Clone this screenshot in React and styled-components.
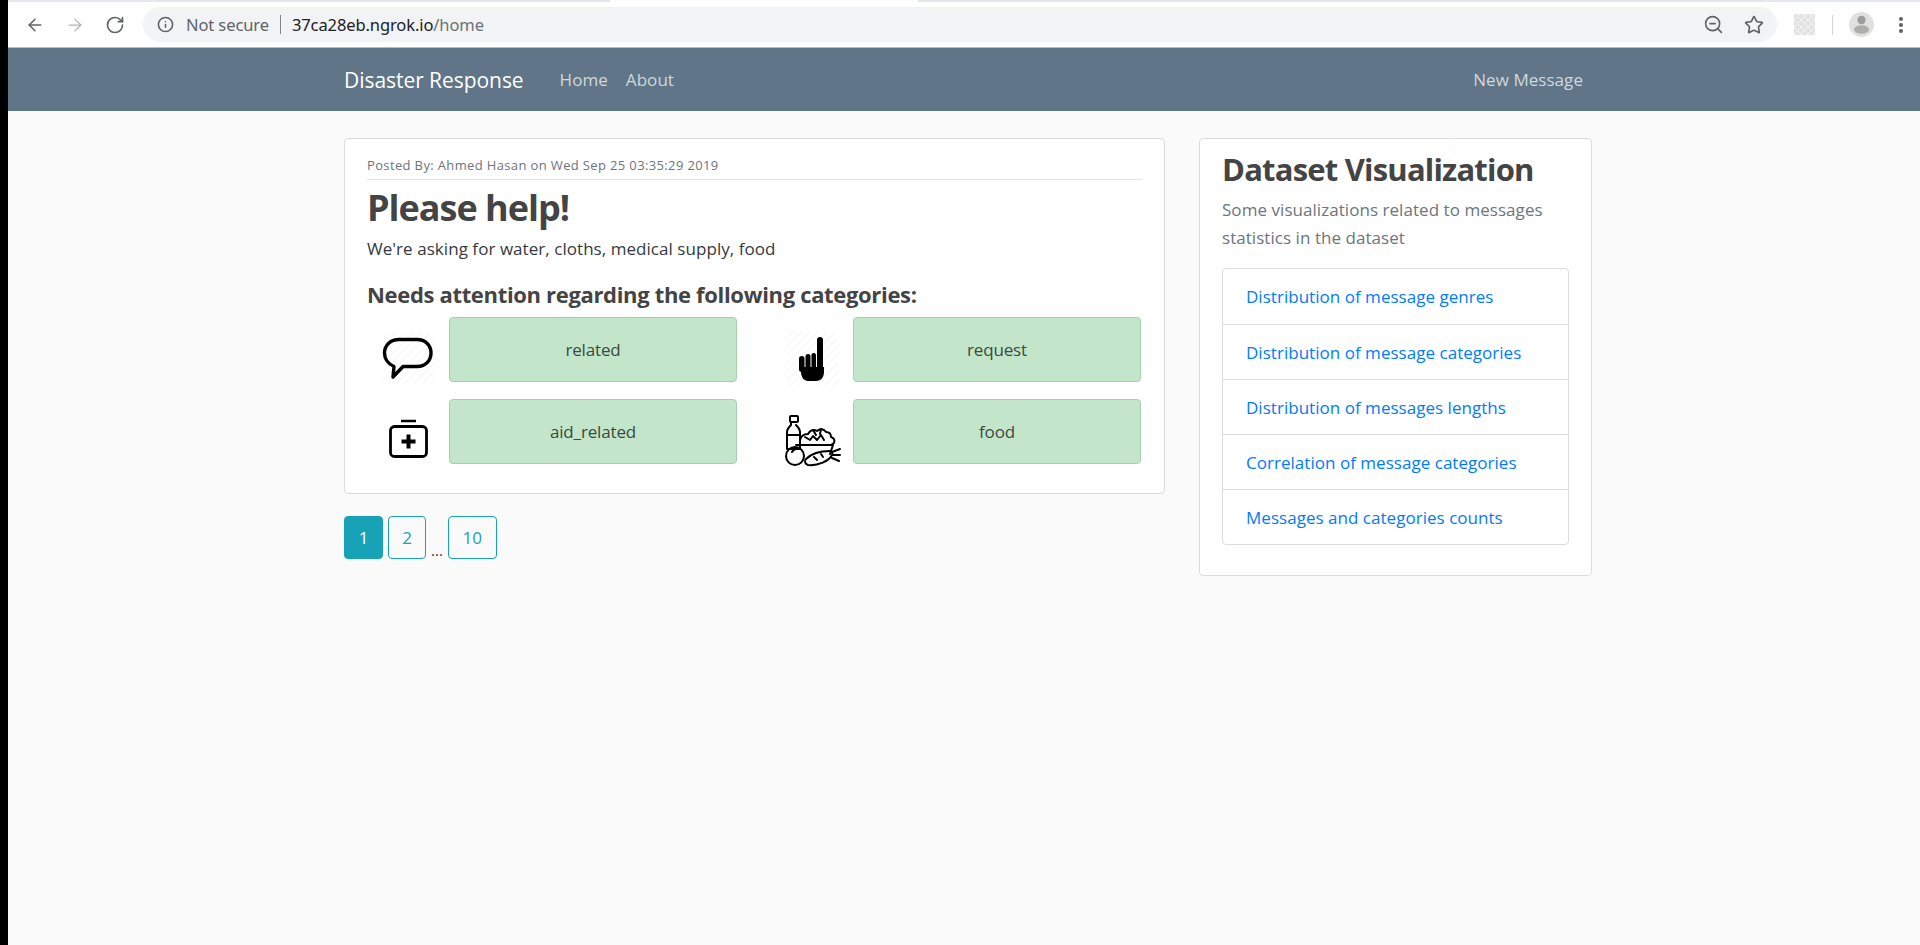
import React from "react";
import styled, { createGlobalStyle } from "styled-components";
import { ArrowLeft, ArrowRight, RotateCw, Info, ZoomOut, Star } from "lucide-react";

const Global = createGlobalStyle`
  html, body { margin: 0; padding: 0; height: 100%; background: #000; }
  #root { height: 100%; }
  * { box-sizing: border-box; }
  body {
    font-family: "Open Sans", "Noto Sans", "Liberation Sans", sans-serif;
    color: #343a40;
    overflow: hidden;
  }
`;

const Shell = styled.div`
  height: 945px;
  padding-left: 8px;
  background: #000;
`;

const Window = styled.div`
  height: 100%;
  background: #fafafa;
  display: flex;
  flex-direction: column;
`;

const TabEdge = styled.div`
  height: 2px;
  flex: none;
  background: linear-gradient(to right, #e4e8ec 0 602px, #fff 602px 910px, #e4e8ec 910px);
`;

const Toolbar = styled.div`
  height: 46px;
  flex: none;
  background: #fff;
  border-bottom: 1px solid #b8bcc0;
  display: flex;
  align-items: center;
  padding: 0 0 0 17px;
  color: #5f6368;
`;

const NavIcons = styled.div`
  display: flex;
  align-items: center;
  gap: 20px;
  margin-right: 18px;
`;

const Omnibox = styled.div`
  width: 1634px;
  height: 35px;
  border-radius: 18px;
  background: #f1f3f4;
  display: flex;
  align-items: center;
  padding: 0 13px 0 14px;
  font-size: 16.5px;
  font-family: "Noto Sans", sans-serif;
  letter-spacing: -0.1px;
`;

const Secure = styled.span`
  margin-left: 12px;
  color: #5f6368;
`;

const Bar = styled.span`
  width: 1px;
  height: 19px;
  background: #80868b;
  margin: 0 11px;
`;

const Host = styled.span`
  color: #202124;
`;

const Path = styled.span`
  color: #6c7075;
`;

const OmniIcons = styled.div`
  margin-left: auto;
  display: flex;
  align-items: center;
  gap: 20px;
`;

const ChromeRight = styled.div`
  display: flex;
  align-items: center;
  margin-left: 17px;
`;

const ExtIcon = styled.div`
  width: 21px;
  height: 21px;
  background: #e2e2e2;
  background-image: repeating-linear-gradient(45deg, #f6f6f6 0 1px, transparent 1px 5px),
    repeating-linear-gradient(-45deg, #f6f6f6 0 1px, transparent 1px 5px);
`;

const Separator = styled.div`
  width: 1px;
  height: 20px;
  background: #d4d6d8;
  margin: 0 16px 0 17px;
`;

const Avatar = styled.div`
  width: 25px;
  height: 25px;
  border-radius: 50%;
  background: #e0e0e0;
  overflow: hidden;
`;

const Dots = styled.div`
  margin-left: 25px;
  display: flex;
  flex-direction: column;
  gap: 2px;
  span {
    width: 4px;
    height: 4px;
    border-radius: 50%;
    background: #5f6368;
  }
`;

const Navbar = styled.nav`
  height: 63px;
  flex: none;
  background: #607587;
  display: flex;
  align-items: center;
  padding: 0 337px 0 336px;
  font-size: 17px;
  letter-spacing: 0.05px;
`;

const Brand = styled.a`
  color: #fff;
  font-size: 21px;
  margin-right: 36px;
  letter-spacing: -0.05px;
`;

const NavLink = styled.a`
  color: rgba(255, 255, 255, 0.72);
  margin-right: ${(p) => p.$gap || 0}px;
  margin-left: ${(p) => (p.$right ? "auto" : "0")};
`;

const Content = styled.main`
  display: flex;
  align-items: flex-start;
  gap: 34px;
  padding: 27px 0 0 336px;
`;

const MainColumn = styled.div`
  width: 821px;
`;

const Card = styled.section`
  background: #fff;
  border: 1px solid #dcdcdc;
  border-radius: 4px;
`;

const PostCard = styled(Card)`
  height: 356px;
  padding: 17px 22px 0 22px;
`;

const Meta = styled.div`
  font-size: 13px;
  line-height: 18px;
  color: #6c757d;
  padding-bottom: 5px;
  border-bottom: 1px solid #e3e3e3;
  letter-spacing: 0.36px;
`;

const Title = styled.h1`
  margin: 3px 0 0;
  font-size: 36px;
  line-height: 50px;
  font-weight: 700;
  color: #444;
  letter-spacing: -1px;
`;

const Body = styled.p`
  margin: 3px 0 0;
  font-size: 17px;
  line-height: 25px;
  color: #343a40;
  letter-spacing: 0.05px;
`;

const SubTitle = styled.h4`
  margin: 17px 0 0;
  font-size: 22px;
  line-height: 32px;
  font-weight: 700;
  color: #444;
  letter-spacing: -0.33px;
`;

const Categories = styled.div`
  margin-top: 7px;
  display: grid;
  grid-template-columns: 370px 370px;
  column-gap: 34px;
  row-gap: 17px;
`;

const CategoryItem = styled.div`
  display: flex;
  align-items: stretch;
  justify-content: space-between;
`;

const IconSlot = styled.div`
  width: 82px;
  display: flex;
  align-items: flex-end;
  justify-content: center;
  svg {
    margin-bottom: -3px;
    flex: none;
  }
`;

const Chip = styled.div`
  width: 288px;
  height: 65px;
  background: #c3e6cb;
  border: 1px solid #a5cfae;
  border-radius: 4px;
  display: flex;
  align-items: center;
  justify-content: center;
  font-size: 17px;
  color: #3b4a40;
  letter-spacing: -0.15px;
`;

const Pager = styled.div`
  margin-top: 22px;
  display: flex;
  align-items: flex-end;
  gap: 5px;
`;

const PageButton = styled.a`
  height: 43px;
  min-width: ${(p) => p.$width}px;
  border: 1px solid #17a2b8;
  border-radius: 4px;
  display: flex;
  align-items: center;
  justify-content: center;
  font-size: 17px;
  color: ${(p) => (p.$active ? "#fff" : "#17a2b8")};
  background: ${(p) => (p.$active ? "#17a2b8" : "transparent")};
`;

const Ellipsis = styled.span`
  font-size: 15px;
  line-height: 17px;
  color: #333;
`;

const SideCard = styled(Card)`
  width: 393px;
  height: 438px;
  padding: 6px 22px 0 22px;
`;

const SideTitle = styled.h2`
  margin: 0;
  font-size: 31px;
  line-height: 48px;
  font-weight: 700;
  color: #444;
  letter-spacing: -0.8px;
`;

const Lead = styled.p`
  margin: 3px 0 0;
  font-size: 17px;
  line-height: 28px;
  color: #6c757d;
  letter-spacing: 0.05px;
`;

const LinkList = styled.ul`
  list-style: none;
  margin: 16px 0 0;
  padding: 0;
  border: 1px solid #dcdcdc;
  border-radius: 4px;
`;

const LinkItem = styled.li`
  height: 55px;
  padding-left: 23px;
  display: flex;
  align-items: center;
  font-size: 17px;
  color: #007bff;
  letter-spacing: 0.03px;
  & + & {
    border-top: 1px solid #dcdcdc;
  }
`;

const Hatch = ({ id }) => (
  <defs>
    <pattern id={id} width="6" height="6" patternUnits="userSpaceOnUse" patternTransform="rotate(-45)">
      <rect width="6" height="1" fill="#f5f5f5" />
    </pattern>
  </defs>
);

const BubbleIcon = () => (
  <svg width="60" height="60" viewBox="0 0 60 60">
    <Hatch id="hatch-a" />
    <rect x="5" y="8" width="52" height="50" fill="url(#hatch-a)" />
    <path
      d="M21 14.500h18c8 0 14 5.500 14 13.500s-6 13.500-14 13.500H25L15 52l1-10.500C10 39 6.500 33.500 6.500 28c0-8 6.500-13.500 14.500-13.500z"
      fill="none"
      stroke="#000"
      strokeWidth="3.400"
      strokeLinejoin="round"
    />
  </svg>
);

const FingerIcon = () => (
  <svg width="60" height="60" viewBox="0 0 60 60">
    <Hatch id="hatch-b" />
    <rect x="5" y="7" width="51" height="53" fill="url(#hatch-b)" />
    <rect x="35" y="12" width="6" height="32" rx="3" fill="#000" />
    <rect x="17" y="31" width="5.500" height="16" rx="2.700" fill="#000" />
    <rect x="23.500" y="29" width="5" height="16" rx="2.500" fill="#000" />
    <rect x="29.500" y="28" width="4.500" height="16" rx="2.200" fill="#000" />
    <path d="M19 42h23v5c0 5-3 9-8 9h-8c-4 0-7-4-7-9z" fill="#000" />
  </svg>
);

const KitIcon = () => (
  <svg width="60" height="60" viewBox="0 0 60 60" fill="none" stroke="#000">
    <path d="M23 14h15" strokeWidth="2.500" />
    <rect x="12.500" y="19.500" width="36" height="30" rx="4" strokeWidth="2.800" />
    <path d="M30.500 27.500v14M23.500 34.500h14" strokeWidth="4" />
  </svg>
);

const FoodIcon = () => (
  <svg width="60" height="60" viewBox="0 0 60 60" fill="none" stroke="#000" strokeWidth="2" strokeLinejoin="round" strokeLinecap="round">
    <g transform="translate(2 4)">
      <rect x="6" y="5" width="8" height="6" rx="1" />
      <path d="M7 11v3c-2 2-4 4-4 7v17h13V21c0-3-2-5-4-7" />
      <path d="M3 24h13" />
      <path d="M16 29c1-4 4-6 8-6 2-4 6-5 9-3 3-3 7-2 9 1 3 0 5 2 5 5 3 1 4 3 3 6l-3 2H16z" />
      <path d="M21 26l5 3 3-4 4 4 4-5 3 5M29 19l3 5M37 18l-1 5" />
      <path d="M12 34h37l-3 9" />
      <circle cx="11" cy="45" r="9" />
      <path d="M8 41c1-2 3-3 5-3" />
      <path d="M22 48c6-6 16-8 24-8 2 0 3 2 2 4-3 6-14 11-24 10-3-1-4-4-2-6z" />
      <path d="M30 46l3 3M37 43l2 3" />
      <path d="M48 41l8-3M49 44l7 0M48 47l7 3" />
    </g>
  </svg>
);

const AvatarIcon = () => (
  <svg width="25" height="25" viewBox="0 0 25 25">
    <circle cx="12.500" cy="8" r="4.200" fill="#9e9e98" />
    <ellipse cx="12.500" cy="17.500" rx="7.500" ry="4.200" fill="#aeaea8" />
  </svg>
);

const categories = [
  { name: "related", icon: <BubbleIcon /> },
  { name: "request", icon: <FingerIcon /> },
  { name: "aid_related", icon: <KitIcon /> },
  { name: "food", icon: <FoodIcon /> },
];

const links = [
  "Distribution of message genres",
  "Distribution of message categories",
  "Distribution of messages lengths",
  "Correlation of message categories",
  "Messages and categories counts",
];

const App = () => {
  return (
    <Shell>
      <Global />
      <Window>
        <TabEdge />
        <Toolbar>
          <NavIcons>
            <ArrowLeft size={20} strokeWidth={1.8} />
            <ArrowRight size={20} strokeWidth={1.5} color="#b0b3b6" />
            <RotateCw size={20} strokeWidth={2} />
          </NavIcons>
          <Omnibox>
            <Info size={17} strokeWidth={2.2} />
            <Secure>Not secure</Secure>
            <Bar />
            <Host>37ca28eb.ngrok.io</Host>
            <Path>/home</Path>
            <OmniIcons>
              <ZoomOut size={21} strokeWidth={1.8} />
              <Star size={20} strokeWidth={2} />
            </OmniIcons>
          </Omnibox>
          <ChromeRight>
            <ExtIcon />
            <Separator />
            <Avatar>
              <AvatarIcon />
            </Avatar>
            <Dots>
              <span />
              <span />
              <span />
            </Dots>
          </ChromeRight>
        </Toolbar>

        <Navbar>
          <Brand>Disaster Response</Brand>
          <NavLink $gap={18}>Home</NavLink>
          <NavLink>About</NavLink>
          <NavLink $right>New Message</NavLink>
        </Navbar>

        <Content>
          <MainColumn>
            <PostCard>
              <Meta>Posted By: Ahmed Hasan on Wed Sep 25 03:35:29 2019</Meta>
              <Title>Please help!</Title>
              <Body>We're asking for water, cloths, medical supply, food</Body>
              <SubTitle>Needs attention regarding the following categories:</SubTitle>
              <Categories>
                {categories.map((c) => (
                  <CategoryItem key={c.name}>
                    <IconSlot>{c.icon}</IconSlot>
                    <Chip>{c.name}</Chip>
                  </CategoryItem>
                ))}
              </Categories>
            </PostCard>
            <Pager>
              <PageButton $active $width={39}>1</PageButton>
              <PageButton $width={38}>2</PageButton>
              <Ellipsis>...</Ellipsis>
              <PageButton $width={49}>10</PageButton>
            </Pager>
          </MainColumn>

          <SideCard>
            <SideTitle>Dataset Visualization</SideTitle>
            <Lead>Some visualizations related to messages statistics in the dataset</Lead>
            <LinkList>
              {links.map((l) => (
                <LinkItem key={l}>{l}</LinkItem>
              ))}
            </LinkList>
          </SideCard>
        </Content>
      </Window>
    </Shell>
  );
};

export default App;
